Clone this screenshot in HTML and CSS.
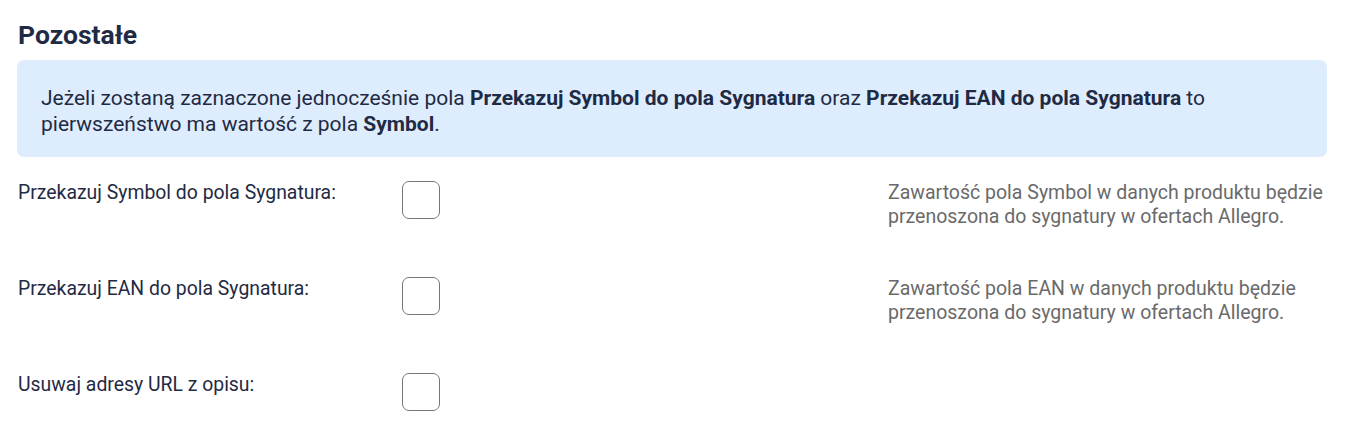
FILE: index.html
```html
<!DOCTYPE html>
<html lang="pl">
<head>
<meta charset="utf-8">
<link rel="stylesheet" href="styles.css">
</head>
<body>
<section class="section">
  <h2 class="title">Pozostałe</h2>
  <div class="info">
    Jeżeli zostaną zaznaczone jednocześnie pola <b>Przekazuj Symbol do pola Sygnatura</b> oraz <b>Przekazuj EAN do pola Sygnatura</b> to pierwszeństwo ma wartość z pola <b>Symbol</b>.
  </div>
  <div class="row">
    <label class="label">Przekazuj Symbol do pola Sygnatura:</label>
    <div class="control"><span class="checkbox"></span></div>
    <p class="hint">Zawartość pola Symbol w danych produktu będzie przenoszona do sygnatury w ofertach Allegro.</p>
  </div>
  <div class="row">
    <label class="label">Przekazuj EAN do pola Sygnatura:</label>
    <div class="control"><span class="checkbox"></span></div>
    <p class="hint">Zawartość pola EAN w danych produktu będzie przenoszona do sygnatury w ofertach Allegro.</p>
  </div>
  <div class="row">
    <label class="label">Usuwaj adresy URL z opisu:</label>
    <div class="control"><span class="checkbox"></span></div>
    <p class="hint"></p>
  </div>
</section>
</body>
</html>
```
FILE: styles.css
```css
* { box-sizing: border-box; }
body {
  margin: 0;
  background: #fff;
  font-family: Roboto, "Noto Sans", sans-serif;
  color: #1f2a44;
}
.section {
  padding: 19px 19px 0 17px;
}
.title {
  margin: 0 0 9px 1px;
  font-size: 26.5px;
  line-height: 32px;
  font-weight: 700;
  color: #1f2a44;
}
.info {
  background: #deedfd;
  border-radius: 7px;
  padding: 25px 25px 20px 24px;
  font-size: 21px;
  line-height: 26px;
  color: #1f2a44;
}
.info b { font-weight: 700; }
.row {
  display: grid;
  grid-template-columns: 385px 486px 1fr;
  align-items: start;
  height: 96px;
  padding-top: 23.5px;
}
.label {
  padding-left: 1px;
  font-size: 19.4px;
  line-height: 24px;
  color: #1f2a44;
}
.checkbox {
  display: block;
  width: 38px;
  height: 38px;
  border: 1px solid #777;
  border-radius: 7px;
  background: #fff;
}
.hint {
  margin: 0;
  font-size: 19.5px;
  line-height: 24px;
  color: #6a6a6a;
}
```
